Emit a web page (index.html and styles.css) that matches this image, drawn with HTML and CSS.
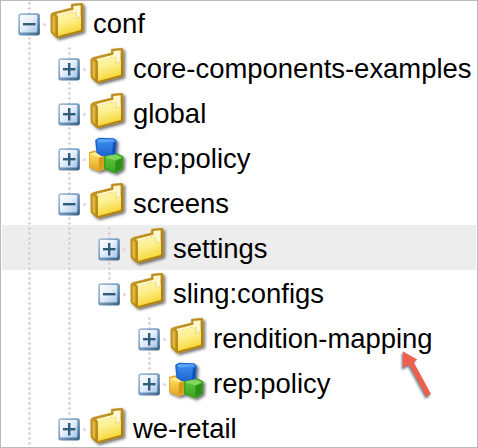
FILE: index.html
```html
<!DOCTYPE html>
<html lang="en">
<head>
<meta charset="utf-8">
<title>Repository tree</title>
<link rel="stylesheet" href="styles.css">
</head>
<body>
<svg class="defs" aria-hidden="true">
  <defs>
    <linearGradient id="box" x1="0" y1="0" x2="1" y2="1"><stop offset="0" stop-color="#fff"/><stop offset=".5" stop-color="#e3edfa"/><stop offset="1" stop-color="#a5c4e8"/></linearGradient>
    <linearGradient id="rim" x1="0" y1="0" x2="1" y2="1"><stop offset="0" stop-color="#a9c3dd"/><stop offset=".5" stop-color="#779dbf"/><stop offset="1" stop-color="#365f82"/></linearGradient>
    <linearGradient id="gold" x1="0" y1="0" x2=".3" y2="1"><stop offset="0" stop-color="#fff7b8"/><stop offset=".5" stop-color="#fdee8c"/><stop offset="1" stop-color="#f6d631"/></linearGradient>
    <linearGradient id="edge" x1="0" y1="0" x2="1" y2="1"><stop offset="0" stop-color="#c99b27"/><stop offset="1" stop-color="#a97808"/></linearGradient>
    <linearGradient id="blue" x1="0" y1="0" x2="0" y2="1"><stop offset="0" stop-color="#3d91f2"/><stop offset="1" stop-color="#1f66d4"/></linearGradient>
    <linearGradient id="amber" x1="0" y1="0" x2="0" y2="1"><stop offset="0" stop-color="#ffe46c"/><stop offset="1" stop-color="#e6a820"/></linearGradient>
    <linearGradient id="green" x1="0" y1="0" x2="0" y2="1"><stop offset="0" stop-color="#67c83d"/><stop offset="1" stop-color="#3ba822"/></linearGradient>
    <filter id="shade" x="-20%" y="-20%" width="150%" height="150%"><feDropShadow dx="1.8" dy="1.8" stdDeviation="1.5" flood-color="#000" flood-opacity=".6"/></filter>
    <symbol id="minus" viewBox="0 0 40 45">
      <rect x="9.3" y="13.3" width="21.6" height="22.2" rx="2.5" fill="url(#rim)"/>
      <rect x="11" y="15" width="17.3" height="17.5" rx="1" fill="url(#box)"/>
      <path d="M14 24.2h12.5" stroke="#315d7a" stroke-width="2.4"/>
    </symbol>
    <symbol id="plus" viewBox="0 0 40 45">
      <use href="#minus"/>
      <path d="M20.2 18v12.5" stroke="#315d7a" stroke-width="2.4"/>
    </symbol>
    <symbol id="folder" viewBox="0 0 40 45">
      <g filter="url(#shade)">
        <path d="M1.8 14.3 4 12.6 22.4 8V4.2L32.8 3.3 34 4V31.2L8.2 38 2 32.4Z" fill="url(#edge)" stroke="#b8860f" stroke-width=".6" stroke-linejoin="round"/>
      </g>
      <path d="M3.4 15.5 6.4 17V34.5L3.4 31.4Z" fill="#dfb63b"/>
      <path d="M7.4 14 24.4 9.7V6L31.6 5.2V29L24 30V12L8.5 16Z" fill="#fff8cf"/>
      <path d="M8.8 15.6 26.6 11.4V18.5L28.6 18 31.8 15V29.9L9 36Z" fill="url(#gold)"/>
      <path d="M26.8 11.5V18.4L31.4 16.6" fill="none" stroke="#e9d070" stroke-width=".8"/>
      <path d="M8 16V35.4" fill="none" stroke="#b88a1c" stroke-width="1.1"/>
    </symbol>
    <symbol id="cubes" viewBox="0 0 40 45">
      <g filter="url(#shade)" stroke-linejoin="round" stroke-width="1.6">
        <path d="M0 18 5.5 16.2 15.5 19V33.5L9.5 35.4 0 31.5Z" fill="url(#amber)" stroke="#e2a72a"/>
        <path d="M15.4 22 25.5 18 33.7 22 33 33.5 26 37.5 15.8 33.6Z" fill="url(#green)" stroke="#3a9f22"/>
        <path d="M7 5.5 10 3.6 24.8 4 27 6 26 18.6 13 20.5 8.2 17.5Z" fill="url(#blue)" stroke="#2465ca"/>
      </g>
      <path d="M.5 18.8 5.5 17.4 7.6 18.2 12.5 21.2 9.6 22.2Z" fill="#ffe994"/>
      <path d="M9.8 22.8 14.4 21.5V33L9.8 35Z" fill="#d89a1c"/>
      <path d="M7.8 5.4 10.5 4 24.5 4.4 26 6 11.2 7.6Z" fill="#5ba7fb"/>
      <path d="M24 8 26.8 6.8 25.6 18.4 23 18.8Z" fill="#1450b0"/>
      <path d="M16 22.6 18 21 27 19.6 33 22.3 26.4 25.2Z" fill="#7fd65b"/>
      <path d="M26.5 26 33.4 23 32.6 33.2 26.3 36.9Z" fill="#2c8f16"/>
    </symbol>
  </defs>
</svg>
<main class="tree">
  <div class="row"><span class="cell line node"><svg class="icon"><use href="#minus"/></svg></span><svg class="icon"><use href="#folder"/></svg><span class="label">conf</span></div>
  <div class="row"><span class="cell line"></span><span class="cell line node"><svg class="icon"><use href="#plus"/></svg></span><svg class="icon"><use href="#folder"/></svg><span class="label">core-components-examples</span></div>
  <div class="row"><span class="cell line"></span><span class="cell line node"><svg class="icon"><use href="#plus"/></svg></span><svg class="icon"><use href="#folder"/></svg><span class="label">global</span></div>
  <div class="row"><span class="cell line"></span><span class="cell line node"><svg class="icon"><use href="#plus"/></svg></span><svg class="icon"><use href="#cubes"/></svg><span class="label">rep:policy</span></div>
  <div class="row"><span class="cell line"></span><span class="cell line node"><svg class="icon"><use href="#minus"/></svg></span><svg class="icon"><use href="#folder"/></svg><span class="label">screens</span></div>
  <div class="row selected"><span class="cell line"></span><span class="cell line"></span><span class="cell line node"><svg class="icon"><use href="#plus"/></svg></span><svg class="icon"><use href="#folder"/></svg><span class="label">settings</span></div>
  <div class="row"><span class="cell line"></span><span class="cell line"></span><span class="cell line node last"><svg class="icon"><use href="#minus"/></svg></span><svg class="icon"><use href="#folder"/></svg><span class="label">sling:configs</span></div>
  <div class="row"><span class="cell line"></span><span class="cell line"></span><span class="cell"></span><span class="cell line node"><svg class="icon"><use href="#plus"/></svg></span><svg class="icon"><use href="#folder"/></svg><span class="label">rendition-mapping</span></div>
  <div class="row"><span class="cell line"></span><span class="cell line"></span><span class="cell"></span><span class="cell line node last"><svg class="icon"><use href="#plus"/></svg></span><svg class="icon"><use href="#cubes"/></svg><span class="label">rep:policy</span></div>
  <div class="row"><span class="cell line"></span><span class="cell line node last"><svg class="icon"><use href="#plus"/></svg></span><svg class="icon"><use href="#folder"/></svg><span class="label">we-retail</span></div>
  <svg class="pointer" viewBox="0 0 40 60"><path d="M7.7 6.3 22.3 14.5 18.6 17 36 49 31.4 51.7 14 19.8 7.7 23.3Z" fill="#ed604f"/></svg>
</main>
</body>
</html>
```

FILE: styles.css
```css
* {
  box-sizing: border-box;
}

body {
  margin: 0;
  background: #fff;
  color: #000;
  font-family: "Liberation Sans", Arial, sans-serif;
  font-size: 27.45px;
}

.defs {
  position: absolute;
  width: 0;
  height: 0;
}

.tree {
  position: relative;
  width: 478px;
  height: 448px;
  overflow: hidden;
}

.tree::after {
  content: "";
  position: absolute;
  inset: 0;
  border: 1px solid #b9b9b9;
}

.row {
  display: flex;
  height: 45px;
  margin: 0 2px;
  padding-left: 7px;
}

.selected {
  background: #ededed;
}

.cell,
.icon {
  display: block;
  flex: none;
  width: 40px;
  height: 45px;
  overflow: visible;
}

.line {
  background-image: radial-gradient(circle at 20.4px 3.5px, #dccacc 0.8px, transparent 1.7px);
  background-size: 40px 5px;
}

.node {
  position: relative;
}

.node::after {
  content: "";
  position: absolute;
  left: 34px;
  top: 22.5px;
  width: 3px;
  height: 3px;
  border-radius: 50%;
  background: #e6d2d5;
}

.last {
  background-repeat: no-repeat;
  background-image:
    radial-gradient(circle at 20.4px 3.5px, #dccacc 0.8px, transparent 1.7px),
    radial-gradient(circle at 20.4px 3.5px, #dccacc 0.8px, transparent 1.7px);
  background-position: 0 0, 0 5px;
}

.label {
  padding-left: 4px;
  line-height: 47px;
  white-space: nowrap;
}

.pointer {
  position: absolute;
  left: 395px;
  top: 345px;
  width: 40px;
  height: 60px;
  filter: drop-shadow(-0.5px 2px 1.2px rgba(0, 40, 50, 0.55));
}
```
